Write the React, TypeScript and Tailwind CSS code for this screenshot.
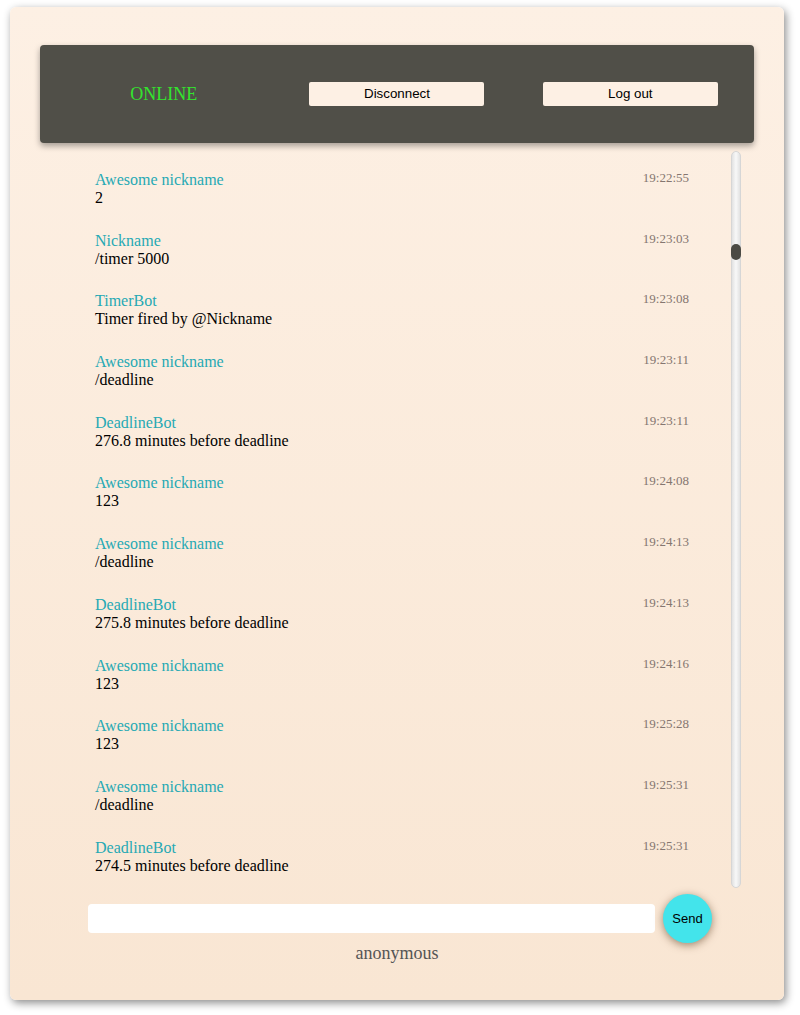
import React from "react";

type Msg = { name: string; text: string; time: string };

const messages: Msg[] = [
  { name: "Awesome nickname", text: "2", time: "19:22:55" },
  { name: "Nickname", text: "/timer 5000", time: "19:23:03" },
  { name: "TimerBot", text: "Timer fired by @Nickname", time: "19:23:08" },
  { name: "Awesome nickname", text: "/deadline", time: "19:23:11" },
  { name: "DeadlineBot", text: "276.8 minutes before deadline", time: "19:23:11" },
  { name: "Awesome nickname", text: "123", time: "19:24:08" },
  { name: "Awesome nickname", text: "/deadline", time: "19:24:13" },
  { name: "DeadlineBot", text: "275.8 minutes before deadline", time: "19:24:13" },
  { name: "Awesome nickname", text: "123", time: "19:24:16" },
  { name: "Awesome nickname", text: "123", time: "19:25:28" },
  { name: "Awesome nickname", text: "/deadline", time: "19:25:31" },
  { name: "DeadlineBot", text: "274.5 minutes before deadline", time: "19:25:31" },
];

const serif = "font-['Liberation_Serif','Times_New_Roman',serif]";
const sans = "font-['Liberation_Sans',Arial,sans-serif]";

const App = () => {
  return (
    <div className="min-h-[1015px] w-[800px] bg-white pt-[7px] pl-[10px]">
      <div
        className={`flex h-[993px] w-[774px] flex-col rounded-[6px] bg-gradient-to-b from-[#fdf0e4] to-[#f9e6d3] shadow-[2px_3px_8px_rgba(0,0,0,0.45)] ${serif}`}
      >
        {/* Header */}
        <div className="mx-[30px] mt-[38px] grid h-[98px] grid-cols-3 items-center rounded-[4px] bg-[#504f48] px-[7px] shadow-[0_3px_6px_rgba(0,0,0,0.35)]">
          <div className="text-center text-[18px] text-[#33e52e]">ONLINE</div>
          <div className="flex justify-center">
            <button className={`h-[24px] w-[175px] rounded-[2px] bg-[#fdf0e4] text-[13.33px] text-black ${sans}`}>
              Disconnect
            </button>
          </div>
          <div className="flex justify-center">
            <button className={`h-[24px] w-[175px] rounded-[2px] bg-[#fdf0e4] text-[13.33px] text-black ${sans}`}>
              Log out
            </button>
          </div>
        </div>

        {/* Chat */}
        <div className="ml-[78px] mt-[8px] flex h-[737px] w-[653px]">
          <div className="flex flex-1 flex-col gap-[24.7px] overflow-hidden pl-[7px] pr-[42px] pt-[20px]">
            {messages.map((m, i) => (
              <div key={i} className="flex items-start justify-between">
                <div className="text-[16px] leading-[18px]">
                  <div className="text-[#26a9b4]">{m.name}</div>
                  <div className="text-black">{m.text}</div>
                </div>
                <div className="-mt-[1px] text-[13px] leading-[15px] text-[#857670]">{m.time}</div>
              </div>
            ))}
          </div>
          <div className="h-full w-[10px] rounded-full border border-[#d6d6d6] bg-gradient-to-r from-[#e2e2e2] via-[#f8f8f8] to-[#e2e2e2] pt-[92px]">
            <div className="-ml-[1px] h-[16px] w-[10px] rounded-full bg-[#4b4a44]" />
          </div>
        </div>

        {/* Input */}
        <div className="ml-[78px] mt-[6px] flex items-center gap-[8px]">
          <input className="h-[29px] w-[567px] rounded-[4px] bg-white outline-none" />
          <button
            className={`h-[49px] w-[49px] rounded-full bg-[#43e4eb] text-[13px] text-black shadow-[0_2px_8px_rgba(80,50,20,0.55)] ${sans}`}
          >
            Send
          </button>
        </div>

        <div className="text-center text-[18px] leading-[20px] text-[#555]">anonymous</div>
      </div>
    </div>
  );
};

export default App;
